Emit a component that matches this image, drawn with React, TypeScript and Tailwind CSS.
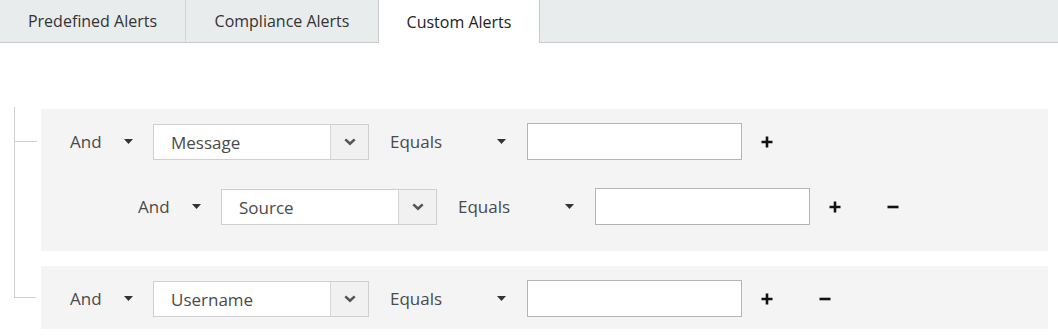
import React from "react";

const Caret = () => (
  <svg width="9" height="5" viewBox="0 0 9 5" className="shrink-0">
    <path d="M0 0 L9 0 L4.5 5 Z" fill="#333" />
  </svg>
);

const Chevron = () => (
  <svg width="12" height="8" viewBox="0 0 12 8">
    <path d="M1.3 1.4 L6 5.8 L10.7 1.4" fill="none" stroke="#555" strokeWidth="2.6" />
  </svg>
);

const Plus = () => (
  <svg width="12" height="12" viewBox="0 0 12 12">
    <path d="M6 0.5 V11.5 M0.5 6 H11.5" stroke="#111" strokeWidth="2.6" />
  </svg>
);

const Minus = () => (
  <svg width="12" height="12" viewBox="0 0 12 12">
    <path d="M0.5 6 H11.5" stroke="#111" strokeWidth="2.6" />
  </svg>
);

function Row({ field, minus }: { field: string; minus?: boolean }) {
  return (
    <div className="flex items-center h-[37px]">
      <div className="flex items-center w-[83px] shrink-0">
        <span className="text-[#4a4a4a]">And</span>
        <span className="ml-[22px]"><Caret /></span>
      </div>
      <div className="flex w-[216px] h-[36px] shrink-0 border border-[#cfcfcf] bg-white">
        <div className="flex-1 flex items-center pl-[17px] pt-[2px] text-[#4a4a4a]">{field}</div>
        <div className="w-[38px] flex items-center justify-center border-l border-[#d6d6d6] bg-[#f1f1f1]">
          <Chevron />
        </div>
      </div>
      <div className="flex items-center w-[137px] ml-[21px] shrink-0">
        <span className="text-[#4a4a4a]">Equals</span>
        <span className="ml-[55px]"><Caret /></span>
      </div>
      <div className="w-[215px] h-[37px] shrink-0 border border-[#b4b4b4] bg-white" />
      <span className="ml-[19px]"><Plus /></span>
      {minus && <span className="ml-[46px]"><Minus /></span>}
    </div>
  );
}

export default function App() {
  return (
    <div className="w-[1058px] h-[336px] bg-white overflow-hidden" style={{ fontFamily: '"Open Sans", sans-serif' }}>
      <div className="flex h-[43px] bg-[#e9ecec] border-b border-[#c9cbcb] text-[16px] text-[#333]">
        <div className="w-[186px] flex items-center justify-center border-r border-[#d2d4d4]">Predefined Alerts</div>
        <div className="w-[192px] flex items-center justify-center">Compliance Alerts</div>
        <div className="w-[162px] -mb-px flex items-center justify-center bg-white border-x border-[#c9cbcb] text-[#222]">Custom Alerts</div>
      </div>
      <div className="ml-[14px] mr-[10px] mt-[64px] text-[17px]">
        <div className="flex pt-[2px] pb-[15px] border-l border-[#cfcfcf]">
          <div className="w-[26px] shrink-0 flex flex-col">
            <div className="h-[32px]" />
            <div className="w-[22px] border-t border-[#cfcfcf]" />
          </div>
          <div className="flex-1 bg-[#f4f4f4] pl-[29px] pt-[14px] pb-[26px] flex flex-col gap-[28px]">
            <Row field="Message" />
            <div className="pl-[68px]">
              <Row field="Source" minus />
            </div>
          </div>
        </div>
        <div className="flex">
          <div className="w-[27px] shrink-0">
            <div className="h-[32px] w-[22px] border-l border-b border-[#cfcfcf]" />
          </div>
          <div className="flex-1 bg-[#f4f4f4] pl-[29px] pt-[14px] pb-[12px]">
            <Row field="Username" minus />
          </div>
        </div>
      </div>
    </div>
  );
}
